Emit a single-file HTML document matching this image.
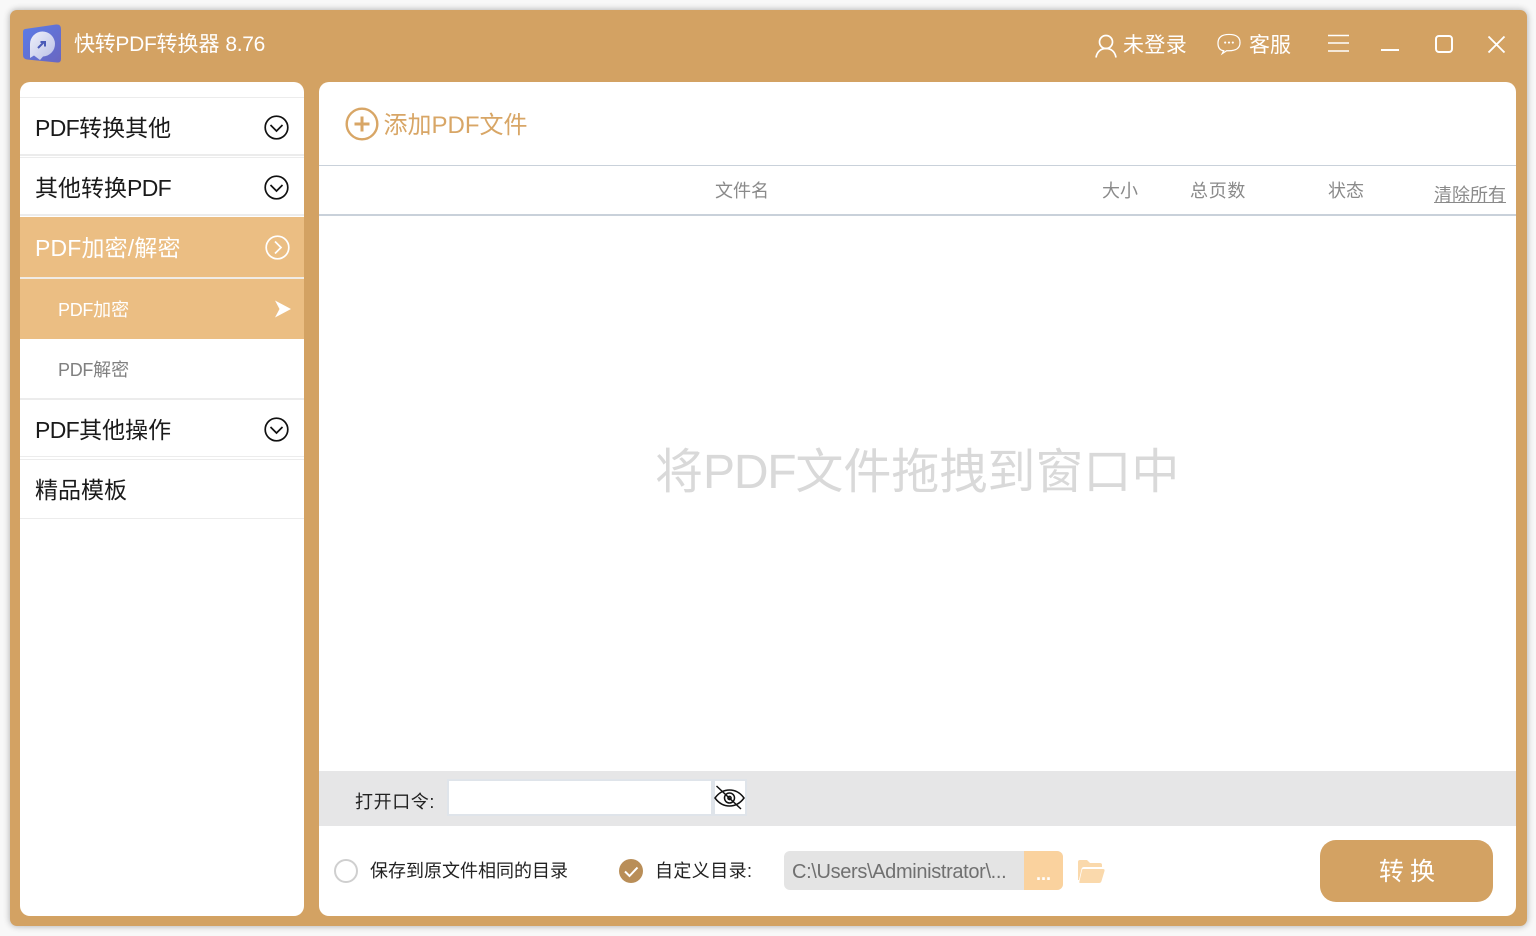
<!DOCTYPE html>
<html lang="zh-CN">
<head>
<meta charset="utf-8">
<title>快转PDF转换器</title>
<style>
*{box-sizing:border-box;margin:0;padding:0}
html,body{width:1536px;height:936px;overflow:hidden;background:#f8f8f8;font-family:"Liberation Sans","Noto Sans CJK SC",sans-serif}
.a{position:absolute}
.t{position:absolute;white-space:nowrap;line-height:1}
svg{position:absolute;display:block}
.ln{position:absolute;left:20px;width:284px;background:#ececec}
.p{letter-spacing:-.65px}
.q{letter-spacing:-.3px}
</style>
</head>
<body>
<div class="a" style="left:10px;top:10px;width:1517px;height:916px;background:#d3a263;border-radius:7px;box-shadow:0 0 7px rgba(0,0,0,.32)"></div>

<svg style="left:20px;top:22px" width="44" height="44" viewBox="0 0 44 44">
<defs><linearGradient id="g" x1="0" y1="0" x2="1" y2="1"><stop offset="0" stop-color="#5a7ce8"/><stop offset="1" stop-color="#6a66c0"/></linearGradient>
<linearGradient id="w" x1="0" y1="0" x2="1" y2="1"><stop offset="0" stop-color="#eef0fa"/><stop offset="1" stop-color="#b9bfe6"/></linearGradient></defs>
<path d="M5 7 36 2.500Q41 2 41 7V37Q41 41 37 40.500L7 37.500Q3 37 3 33V10Q3 7.500 5 7Z" fill="url(#g)"/>
<path d="M10 36V22A12.500 12.500 0 1 1 23 34.500L20 38 14 33.500Z" fill="url(#w)"/>
<path d="M18 26 24 20M20.500 20H25V24.500" stroke="#4a5ab8" stroke-width="2" fill="none"/>
</svg>
<div class="t" style="left:74px;top:34px;font-size:21px;color:#fff"><span class="q">快转PDF</span>转换器 <span class="q">8.76</span></div>

<svg style="left:1094px;top:33px" width="24" height="26" viewBox="0 0 24 26" fill="none" stroke="#fff" stroke-width="1.700"><circle cx="12" cy="9" r="6.500"/><path d="M2 24.500C3 18.500 7 15.500 12 15.500S21 18.500 22 24.500"/></svg>
<div class="t" style="left:1123px;top:35px;font-size:21px;letter-spacing:.4px;color:#fff">未登录</div>
<svg style="left:1217px;top:33px" width="24" height="23" viewBox="0 0 25 24" fill="none" stroke="#fff" stroke-width="1.300"><path d="M7 18.500C3.500 18 1 15.500 1 10.500 1 4.500 5 1.500 12.500 1.500S24 4.500 24 10C24 15.500 20 18.500 12.500 18.500H10L5.500 21.500Z"/><g fill="#fff" stroke="none"><circle cx="8.500" cy="10" r="1.100"/><circle cx="12.500" cy="10" r="1.100"/><circle cx="16.500" cy="10" r="1.100"/></g></svg>
<div class="t" style="left:1249px;top:35px;font-size:21px;color:#fff">客服</div>
<svg style="left:1326px;top:33px" width="24" height="20" viewBox="0 0 24 20" stroke="#fff" stroke-width="1.600"><path d="M2 2.500H23M2 10H23M2 18H23"/></svg>
<div class="a" style="left:1381px;top:49px;width:18px;height:2px;background:#fff"></div>
<div class="a" style="left:1435px;top:35px;width:18px;height:18px;border:2px solid #fff;border-radius:4px"></div>
<svg style="left:1487px;top:35px" width="19" height="19" viewBox="0 0 19 19" stroke="#fff" stroke-width="1.900"><path d="M1.500 1.500 17.500 17.500M17.500 1.500 1.500 17.500"/></svg>

<!-- sidebar -->
<div class="a" style="left:20px;top:82px;width:284px;height:834px;background:#fff;border-radius:10px"></div>
<div class="ln" style="top:97px;height:1px"></div>
<div class="ln" style="top:154px;height:2px"></div>
<div class="ln" style="top:157px;height:1px"></div>
<div class="ln" style="top:214px;height:2px"></div>
<div class="a" style="left:20px;top:217px;width:284px;height:122px;background:#ebbe83"></div>
<div class="a" style="left:20px;top:277px;width:284px;height:2px;background:#f0ece6"></div>
<div class="ln" style="top:398px;height:2px"></div>
<div class="ln" style="top:456px;height:1px"></div>
<div class="ln" style="top:459px;height:1px"></div>
<div class="ln" style="top:518px;height:1px"></div>

<div class="t" style="left:35px;top:117px;font-size:23px;color:#1a1a1a"><span class="p">PDF</span>转换其他</div>
<div class="t" style="left:35px;top:177px;font-size:23px;color:#1a1a1a">其他转换<span class="p">PDF</span></div>
<div class="t" style="left:35px;top:237px;font-size:23px;letter-spacing:.15px;color:#fff">PDF加密/解密</div>
<div class="t" style="left:58px;top:301px;font-size:18px;color:#fff"><span class="q">PDF</span>加密</div>
<div class="t" style="left:58px;top:361px;font-size:18px;color:#808080"><span class="q">PDF</span>解密</div>
<div class="t" style="left:35px;top:419px;font-size:23px;color:#1a1a1a"><span class="p">PDF</span>其他操作</div>
<div class="t" style="left:35px;top:479px;font-size:23px;color:#1a1a1a">精品模板</div>

<svg style="left:264px;top:114.500px" width="25" height="25" viewBox="0 0 25 25" fill="none" stroke="#111" stroke-width="1.700"><circle cx="12.500" cy="12.500" r="11.300"/><path d="M6.500 10 12.500 16 18.500 10"/></svg>
<svg style="left:264px;top:174.500px" width="25" height="25" viewBox="0 0 25 25" fill="none" stroke="#111" stroke-width="1.700"><circle cx="12.500" cy="12.500" r="11.300"/><path d="M6.500 10 12.500 16 18.500 10"/></svg>
<svg style="left:264.500px;top:235px" width="25" height="25" viewBox="0 0 25 25" fill="none" stroke="#fff" stroke-width="1.700"><circle cx="12.500" cy="12.500" r="11.300"/><path d="M10 6.500 16 12.500 10 18.500"/></svg>
<svg style="left:274px;top:300px" width="18" height="18" viewBox="0 0 18 18"><path d="M1 0.500 17 9 1 17.500 5.500 9Z" fill="#fff"/></svg>
<svg style="left:264px;top:416.500px" width="25" height="25" viewBox="0 0 25 25" fill="none" stroke="#111" stroke-width="1.700"><circle cx="12.500" cy="12.500" r="11.300"/><path d="M6.500 10 12.500 16 18.500 10"/></svg>

<!-- main -->
<div class="a" style="left:319px;top:82px;width:1197px;height:834px;background:#fff;border-radius:10px"></div>
<svg style="left:345px;top:107px" width="34" height="34" viewBox="0 0 34 34" fill="none" stroke="#d8a666"><circle cx="17" cy="17" r="15.300" stroke-width="2.400"/><path d="M9.500 17H24.500M17 9.500V24.500" stroke-width="3"/></svg>
<div class="t" style="left:383.500px;top:114px;font-size:24px;color:#d8a666">添加PDF文件</div>
<div class="a" style="left:319px;top:165px;width:1197px;height:1px;background:#c9d1da"></div>
<div class="a" style="left:319px;top:214px;width:1197px;height:2px;background:#c9d1da"></div>
<div class="t" style="left:715px;top:182px;font-size:18px;color:#8a8a8a">文件名</div>
<div class="t" style="left:1102px;top:182px;font-size:18px;color:#8a8a8a">大小</div>
<div class="t" style="left:1190px;top:182px;font-size:18px;letter-spacing:.7px;color:#8a8a8a">总页数</div>
<div class="t" style="left:1328px;top:182px;font-size:18px;color:#8a8a8a">状态</div>
<div class="t" style="left:1434px;top:186px;font-size:18px;color:#8a8a8a;text-decoration:underline">清除所有</div>
<div class="t" style="left:655px;top:449px;font-size:48px;color:#d9d9d9">将<span style="letter-spacing:-1.200px">PDF</span>文件拖拽到窗口中</div>

<!-- password bar -->
<div class="a" style="left:319px;top:771px;width:1197px;height:55px;background:#e6e6e7"></div>
<div class="t" style="left:355px;top:793px;font-size:18px;letter-spacing:.6px;color:#222">打开口令:</div>
<div class="a" style="left:447px;top:779px;width:300px;height:37px;background:#dfe4ea"></div>
<div class="a" style="left:449px;top:781px;width:262px;height:33px;background:#fff"></div>
<div class="a" style="left:715px;top:781px;width:30px;height:33px;background:#fff"></div>
<svg style="left:713.500px;top:784px" width="31" height="28" viewBox="0 0 31 28" fill="none" stroke="#111" stroke-width="1.500"><path d="M1 14C5 8.500 10 6 15.500 6S26 8.500 30 14C26 19.500 21 22 15.500 22S5 19.500 1 14Z"/><circle cx="15.500" cy="14" r="5"/><circle cx="15.500" cy="14" r="1.600"/><path d="M2.500 2 27 25"/></svg>

<!-- bottom -->
<div class="a" style="left:334px;top:859px;width:24px;height:24px;border:2px solid #cfcfcf;border-radius:50%;background:#fff"></div>
<div class="t" style="left:370px;top:862px;font-size:18px;color:#222">保存到原文件相同的目录</div>
<svg style="left:619px;top:859px" width="24" height="24" viewBox="0 0 24 24"><circle cx="12" cy="12" r="12" fill="#b98e58"/><path d="M6 12.500 10.500 17 18.500 8.500" fill="none" stroke="#fff" stroke-width="2"/></svg>
<div class="t" style="left:655px;top:862px;font-size:18px;letter-spacing:.4px;color:#222">自定义目录:</div>
<div class="a" style="left:784px;top:851px;width:279px;height:39px;background:#e4e4e4;border-radius:6px"></div>
<div class="a" style="left:1024px;top:851px;width:39px;height:39px;background:#fad29e;border-radius:0 6px 6px 0"></div>
<div class="t" style="left:792px;top:862px;font-size:20px;letter-spacing:-.35px;color:#707070">C:\Users\Administrator\...</div>
<div class="t" style="left:1036px;top:865px;font-size:18px;font-weight:bold;color:#fff">...</div>
<svg style="left:1077px;top:858px" width="28" height="26" viewBox="0 0 28 26"><path d="M1 4Q1 2 3 2H10L13 5H23Q25 5 25 7V9H7Q5 9 4.500 11L2 22H1Z" fill="#fad9ac"/><path d="M6 11H26Q28 11 27.500 13L24.500 23Q24 25 22 25H3Q2 25 2.300 24L5 12Q5.300 11 6 11Z" fill="#fad9ac"/></svg>
<div class="a" style="left:1320px;top:840px;width:173px;height:62px;background:#d3a263;border-radius:16px"></div>
<div class="t" style="left:1379px;top:860px;font-size:25px;letter-spacing:6px;color:#fff">转换</div>
</body>
</html>
